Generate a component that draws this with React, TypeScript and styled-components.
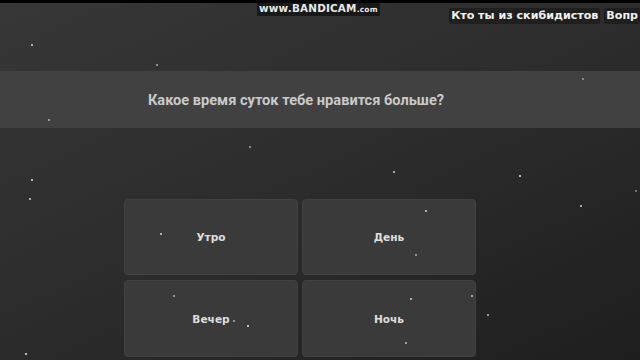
import styled, { createGlobalStyle } from 'styled-components';

const GlobalStyle = createGlobalStyle`
  html, body {
    margin: 0;
    padding: 0;
    background: #1e1e1e;
  }
`;

const stars: [number, number, number][] = [
  [31, 44, 0.8], [156, 64, 0.6], [48, 119, 0.6], [582, 78, 0.5], [249, 146, 0.6],
  [393, 171, 0.8], [31, 179, 0.9], [29, 198, 0.8], [519, 175, 0.9], [580, 205, 0.8],
  [635, 190, 0.5], [25, 353, 0.9], [487, 314, 0.7], [160, 233, 0.8], [425, 210, 0.8],
  [415, 254, 0.6], [173, 295, 0.6], [247, 325, 0.9], [233, 320, 0.6], [410, 298, 0.8],
  [471, 295, 0.7], [405, 342, 0.7],
];

const answers = ['Утро', 'День', 'Вечер', 'Ночь'];

const Page = styled.div`
  position: relative;
  width: 640px;
  height: 360px;
  overflow: hidden;
  display: flex;
  flex-direction: column;
  align-items: center;
  background: linear-gradient(155deg, #373737 0%, #2c2c2c 50%, #1e1e1e 100%);
  font-family: Roboto, "Liberation Sans", sans-serif;
`;

const TopStrip = styled.div`
  width: 100%;
  height: 3px;
  background: #000;
`;

const Header = styled.div`
  width: 100%;
  height: 68px;
  box-sizing: border-box;
  padding-top: 5px;
  display: flex;
  justify-content: flex-end;
  gap: 4px;
  white-space: nowrap;
`;

const Chip = styled.div`
  height: 16px;
  line-height: 16px;
  padding: 0 2px;
  background: rgba(20, 20, 20, 0.55);
  border-radius: 2px;
  color: #f2f2f2;
  font-family: "DejaVu Sans", sans-serif;
  font-weight: bold;
  font-size: 11.1px;
`;

const Watermark = styled.div`
  position: absolute;
  top: 2px;
  left: 257px;
  padding: 0 2px;
  background: rgba(0, 0, 0, 0.5);
  color: #e8e8e8;
  font-family: "DejaVu Sans", sans-serif;
  font-weight: bold;
  font-size: 10.4px;
  line-height: 12px;
  letter-spacing: 0.2px;

  small {
    font-size: 7.5px;
  }
`;

const QuestionBar = styled.div`
  width: 100%;
  height: 57px;
  box-sizing: border-box;
  padding-right: 48px;
  display: flex;
  align-items: center;
  justify-content: center;
  background: #414141;
  color: #cacaca;
  font-weight: bold;
  font-size: 14.6px;
`;

const Grid = styled.div`
  margin: 71px 40px 0 0;
  display: grid;
  grid-template-columns: 174px 174px;
  grid-template-rows: 76px 77px;
  column-gap: 4px;
  row-gap: 5px;
`;

const Answer = styled.div`
  display: flex;
  align-items: center;
  justify-content: center;
  background: #3a3a3a;
  border: 1px solid #414141;
  border-radius: 4px;
  color: #dedede;
  font-family: "DejaVu Sans", sans-serif;
  font-weight: bold;
  font-size: 10.6px;
`;

const Star = styled.span`
  position: absolute;
  width: 2px;
  height: 2px;
  border-radius: 1px;
  background: #fff;
  pointer-events: none;
`;

export default function App() {
  return (
    <>
      <GlobalStyle />
      <Page>
        <TopStrip />
        <Header>
          <Chip>Кто ты из скибидистов</Chip>
          <Chip>Вопр</Chip>
        </Header>
        <QuestionBar>Какое время суток тебе нравится больше?</QuestionBar>
        <Grid>
          {answers.map(a => (
            <Answer key={a}>{a}</Answer>
          ))}
        </Grid>
        {stars.map(([x, y, o], i) => (
          <Star key={i} style={{ left: x, top: y, opacity: o }} />
        ))}
        <Watermark>
          www.BANDICAM<small>.com</small>
        </Watermark>
      </Page>
    </>
  );
}
